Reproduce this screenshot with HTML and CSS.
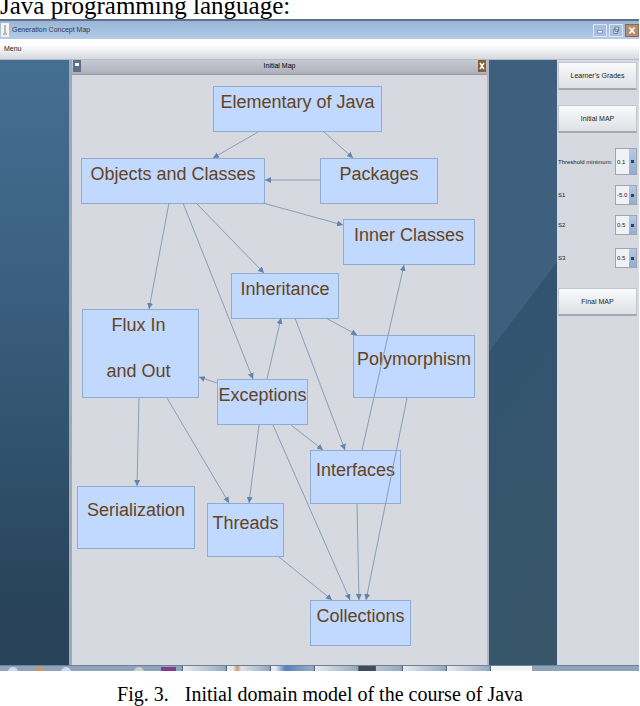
FILE: index.html
```
<!DOCTYPE html>
<html lang="en">
<head>
	<meta charset="UTF-8">
	<title>Generation Concept Map</title>
	<link rel="stylesheet" href="styles.css">
</head>
<body>
<p class="lead">Java programming language:</p>

<div class="window">
	<div class="titlebar">
		<svg class="appicon" viewBox="0 0 8 14"><path d="M0 0h8v14H0z" fill="#f4f4f0"/><path d="M4 2v8M2 11h4" stroke="#8a7a70" fill="none"/></svg>
		<span class="title">Generation Concept Map</span>
		<button class="winbtn" aria-label="Minimize"><svg viewBox="0 0 14 13"><path d="M4 6.500h6v3H4z" fill="#fff" stroke="#6b7f9c"/></svg></button>
		<button class="winbtn" aria-label="Restore"><svg viewBox="0 0 14 13"><path d="M6 2.500h4v5H6zM4.500 5h4v5h-4z" fill="#eef3fa" stroke="#5a6c86"/></svg></button>
		<button class="winbtn close" aria-label="Close"><svg viewBox="0 0 14 13"><path d="M4 3l6 7M10 3l-6 7" stroke="#fff" stroke-width="2"/></svg></button>
	</div>
	<div class="menubar"><button class="menu">Menu</button></div>

	<div class="main">
		<div class="desktop">
			<div class="frame">
				<div class="framebar">
					<button class="framebtn" aria-label="Frame menu"><svg viewBox="0 0 8 12"><path d="M2 3h4v3H2z" fill="#fff"/></svg></button>
					<span>Initial Map</span>
					<button class="framebtn brown" aria-label="Close frame"><svg viewBox="0 0 8 12"><path d="M2 3l4 6M6 3L2 9" stroke="#fff" stroke-width="1.500"/></svg></button>
				</div>
				<div class="map">
					<div class="node elementary">Elementary of Java</div>
					<div class="node objects">Objects and Classes</div>
					<div class="node packages">Packages</div>
					<div class="node inner">Inner Classes</div>
					<div class="node inheritance">Inheritance</div>
					<div class="node flux"><span>Flux In</span><span>and Out</span></div>
					<div class="node polymorphism">Polymorphism</div>
					<div class="node exceptions">Exceptions</div>
					<div class="node serialization">Serialization</div>
					<div class="node threads">Threads</div>
					<div class="node interfaces">Interfaces</div>
					<div class="node collections">Collections</div>
					<svg class="links" viewBox="0 0 415 590">
						<defs>
							<marker id="arrow" viewBox="0 0 6 6" refX="6" refY="3" markerWidth="6" markerHeight="6" markerUnits="userSpaceOnUse" orient="auto"><path d="M0 0l6 3-6 3z" fill="#5f84b0"/></marker>
						</defs>
						<path d="M186 57L141 83"/>
						<path d="M252 57L281 83"/>
						<path d="M248 105H193"/>
						<path d="M191 128L271 150"/>
						<path d="M124 128L192 198"/>
						<path d="M111 128L181 304"/>
						<path d="M97 128L77 234"/>
						<path d="M254 243L285 260"/>
						<path d="M223 243L273 375"/>
						<path d="M195 304L209 243"/>
						<path d="M145 308L127 302"/>
						<path d="M219 350L251 375"/>
						<path d="M201 350L278 525"/>
						<path d="M187 350L177 428"/>
						<path d="M67 323L65 411"/>
						<path d="M95 323L157 428"/>
						<path d="M207 482L260 525"/>
						<path d="M290 375L332 190"/>
						<path d="M285 429L287 525"/>
						<path d="M335 323L294 525"/>
					</svg>
				</div>
			</div>
		</div>

		<div class="side">
			<button class="btn">Learner's Grades</button>
			<button class="btn">Initial MAP</button>
			<div class="field first"><label for="threshold">Threshold minimum:</label><select id="threshold"><option>0.1</option></select></div>
			<div class="field"><label for="s1">S1</label><select id="s1"><option>-5.0</option></select></div>
			<div class="field"><label for="s2">S2</label><select id="s2"><option>0.5</option></select></div>
			<div class="field last"><label for="s3">S3</label><select id="s3"><option>0.5</option></select></div>
			<button class="btn">Final MAP</button>
		</div>
	</div>

	<div class="taskbar">
		<div class="tray"><i class="orb"></i><i class="orb orange"></i><i class="orb"></i><i class="space"></i><i class="orb grey"></i><i class="violet"></i></div>
		<i class="task"></i><i class="task orange"></i><i class="task blue"></i><i class="task"></i><i class="task dark"></i><i class="task"></i><i class="task"></i><i class="task active"></i>
		<div class="rest"></div>
	</div>
</div>

<p class="caption"><span>Fig. 3.</span><span>Initial domain model of the course of Java</span></p>
</body>
</html>
```
FILE: styles.css
```
* {
	box-sizing: border-box;
}
body {
	margin: 0;
	background: #fff;
	overflow-x: hidden;
}
button, select {
	font: inherit;
	color: inherit;
	margin: 0;
	padding: 0;
	border: 0;
	background: none;
}
.lead {
	height: 19px;
	margin: 0;
	font: 25px/11px "Liberation Serif", serif;
	white-space: nowrap;
	color: #000;
}
.window {
	margin-right: 1px;
	font: 7px/12px "Liberation Sans", sans-serif;
	color: #222;
}
.titlebar {
	display: flex;
	align-items: center;
	gap: 2px;
	height: 20px;
	padding-left: 1px;
	border-top: 2px solid #5f7388;
	background: linear-gradient(#9bb5d6, #b2cbe9);
}
.appicon {
	width: 8px;
	height: 14px;
}
.title {
	flex: 1;
	padding-left: 1px;
	color: #2d3a50;
}
.winbtn {
	width: 14px;
	height: 13px;
	border: 1px solid #dbe7f6;
	background: #a9c1e0;
}
.winbtn svg, .framebtn svg {
	display: block;
	width: 100%;
	height: 100%;
}
.close {
	border-color: #8a6a50;
	background: #b58e70;
}
.menubar {
	display: flex;
	align-items: center;
	height: 21px;
	padding-left: 4px;
	border-bottom: 1px solid #b5bac4;
	background: linear-gradient(#fff 30%, #d6d9e0);
}
.main {
	display: flex;
}
.desktop {
	flex: 1;
	padding: 0 68px 0 69px;
	background:
		linear-gradient(127deg, #3c607d 42%, #32546f 42%, #375668) right / 68px 100% no-repeat,
		linear-gradient(#456f92, #3c6080 35%, #30536f 62%, #28435a 90%);
}
.frame {
	border-left: 3px solid #9da9b9;
	border-right: 2px solid #b0b7c2;
	background: #d6d9df;
}
.framebar {
	display: flex;
	align-items: center;
	justify-content: space-between;
	height: 15px;
	padding: 0 1px 2px;
	border-bottom: 1px solid #9599a3;
	background: linear-gradient(#c7cad2, #aeb1bc);
	color: #000;
}
.framebtn {
	width: 8px;
	height: 12px;
	background: #587089;
}
.brown {
	background: #865f38;
}
.map {
	position: relative;
	width: 415px;
	height: 590px;
	margin: 0 auto;
}
.node {
	position: absolute;
	height: 46px;
	border: 1px solid #8eacd4;
	background: #c1d8ff;
	font-size: 18px;
	line-height: 30px;
	text-align: center;
	white-space: nowrap;
	color: #654321;
}
.elementary { left: 141px; top: 11px; width: 169px; }
.objects { left: 9px; top: 83px; width: 184px; }
.packages { left: 248px; top: 83px; width: 118px; }
.inner { left: 271px; top: 144px; width: 132px; }
.inheritance { left: 159px; top: 198px; width: 108px; }
.flux { display: grid; gap: 16px; align-content: start; left: 10px; top: 234px; width: 117px; height: 89px; padding-right: 4px; }
.polymorphism { left: 281px; top: 260px; width: 122px; height: 63px; line-height: 46px; }
.exceptions { left: 145px; top: 304px; width: 91px; }
.serialization { left: 5px; top: 411px; width: 118px; height: 63px; line-height: 46px; }
.threads { left: 135px; top: 428px; width: 77px; height: 54px; line-height: 38px; }
.interfaces { left: 238px; top: 375px; width: 91px; height: 54px; line-height: 38px; }
.collections { left: 238px; top: 525px; width: 101px; }
.links {
	position: absolute;
	left: 0;
	top: 0;
	width: 415px;
	height: 590px;
	fill: none;
}
.links > path {
	stroke: #8a9cb8;
	marker-end: url(#arrow);
}
.side {
	display: flex;
	flex-direction: column;
	width: 82px;
	padding: 2px 2px 0 1px;
	background: #d6d9df;
}
.btn {
	height: 28px;
	margin-bottom: 15px;
	border: 1px solid #c3c6cc;
	border-bottom: 2px solid #a5a8af;
	background: linear-gradient(#fafafc, #dfe1e6);
}
.field {
	display: flex;
	align-items: center;
	justify-content: space-between;
	height: 20px;
	margin-bottom: 10px;
	font-size: 6px;
	white-space: nowrap;
}
.field select {
	appearance: none;
	width: 22px;
	height: 20px;
	padding-left: 1px;
	border: 1px solid #9fa6b2;
	background:
		linear-gradient(#2f4258, #2f4258) right 2px center / 3px 3px no-repeat,
		linear-gradient(#b3cae6, #8faed2) right / 7px 100% no-repeat,
		#f1f2f5;
}
.first, .first select {
	height: 27px;
}
.field.last {
	margin: 3px 0 20px;
}
.taskbar {
	display: flex;
	height: 6px;
	border-top: 1px solid #6d8296;
	background: #8fa4b8;
	overflow: hidden;
}
.tray {
	display: flex;
	justify-content: space-between;
	width: 182px;
	padding: 1px 6px 0 8px;
}
.orb {
	width: 10px;
	height: 10px;
	border-radius: 5px;
	background: #c9dcf5;
}
.orb.orange { background: #c99a68; }
.orb.grey { background: #ccd0d2; }
.space {
	width: 30px;
}
.violet {
	width: 15px;
	background: #853a8e;
}
.task {
	width: 42px;
	margin-right: 2px;
	border-left: 1px solid #51667c;
	background: linear-gradient(to right, #e7ebf1, #99abc1);
}
.task.orange { background: linear-gradient(to right, #e7ebf1 15%, #c99a68 25%, #dde3ec 35%, #99abc1); }
.task.blue { background: linear-gradient(to right, #e7ebf1 10%, #5583bd 35%, #99abc1); }
.task.dark { background: linear-gradient(to right, #444c58 40%, #b8c4d3 42%, #99abc1); }
.task.active { background: #f3f4f6; }
.rest {
	flex: 1;
}
.caption {
	display: flex;
	justify-content: center;
	gap: 16px;
	margin: 12px 0 0;
	font: 20px/23px "Liberation Serif", serif;
	color: #000;
}
```
